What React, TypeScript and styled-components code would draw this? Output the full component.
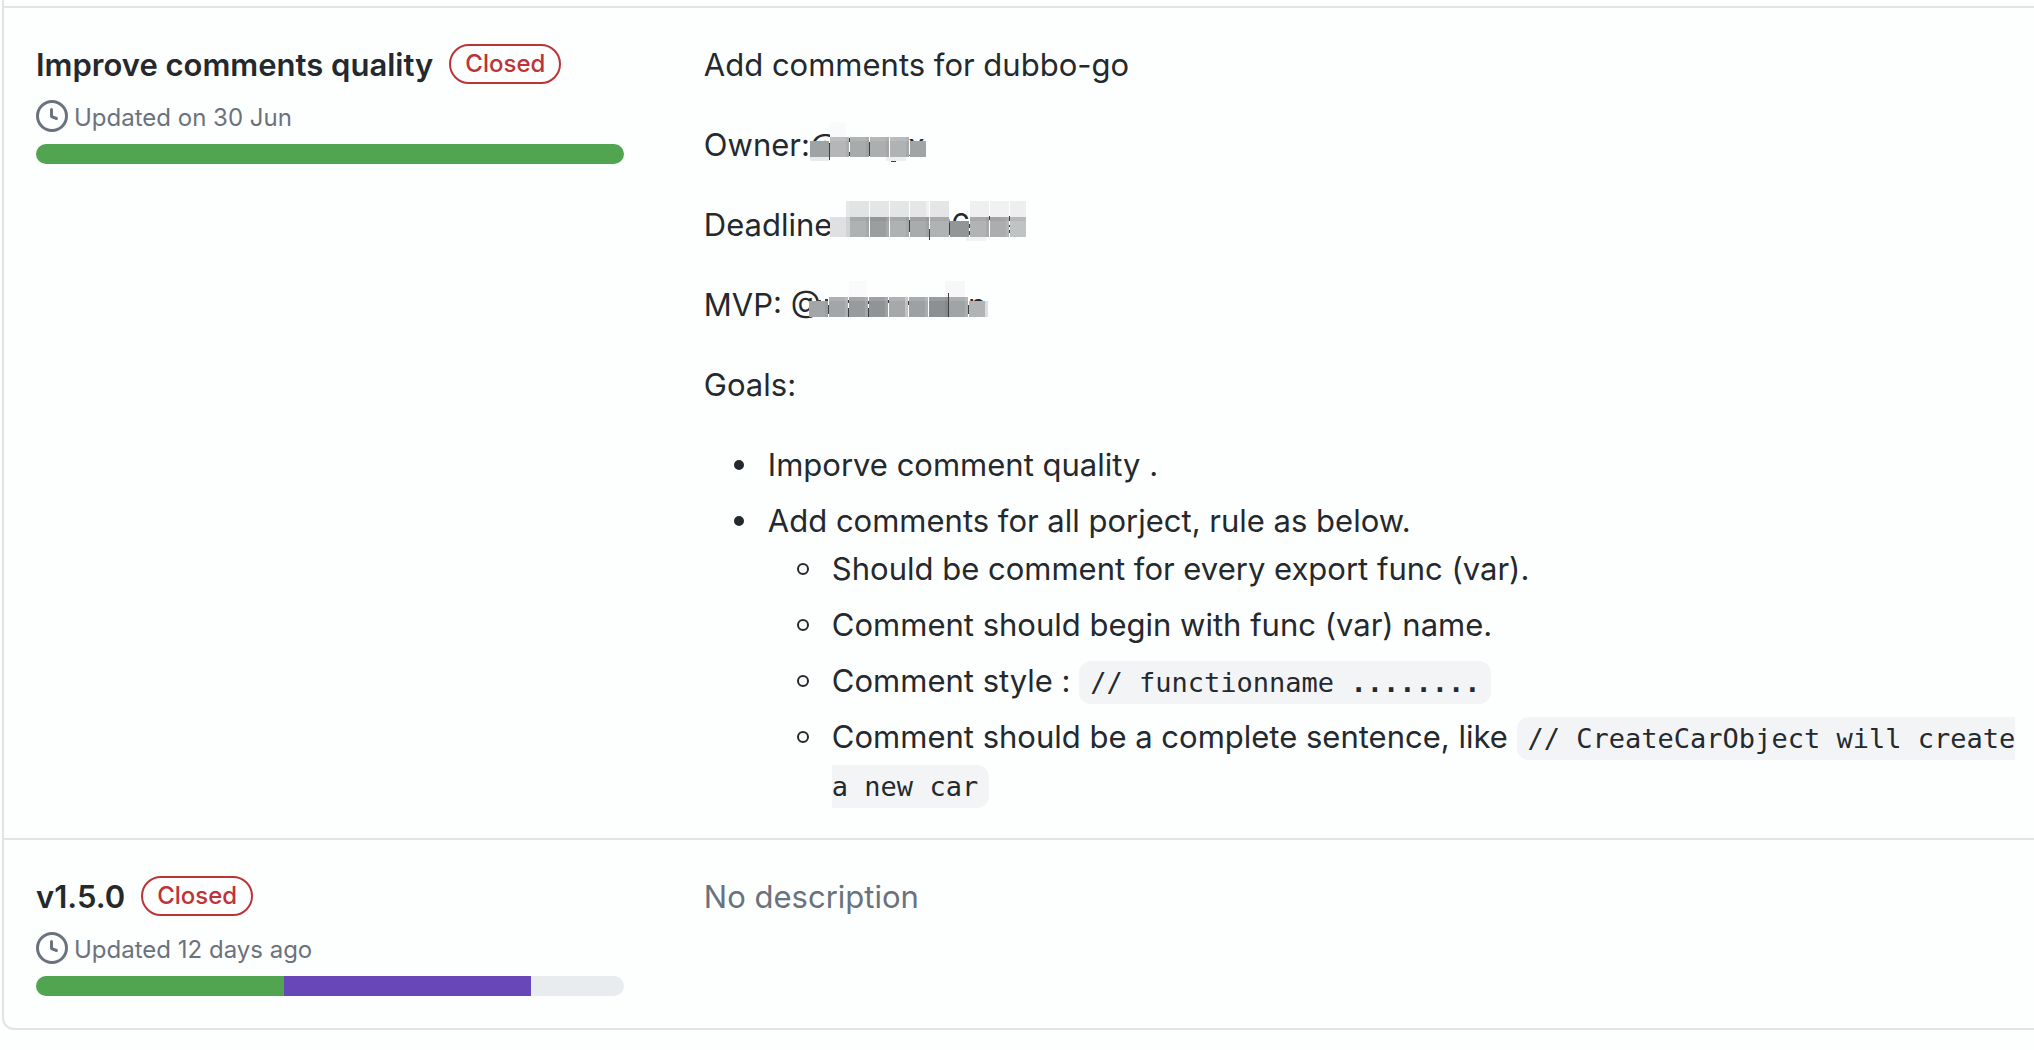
import React from "react";
import styled, { createGlobalStyle } from "styled-components";

const sans = `Inter, "Liberation Sans", sans-serif`;
const mono = `"DejaVu Sans Mono", "Liberation Mono", monospace`;

const GlobalStyle = createGlobalStyle`
  *, *::before, *::after { box-sizing: border-box; }
  body {
    margin: 0;
    background: #fdfefe;
    color: #24292e;
    font-family: ${sans};
    font-size: 31px;
    line-height: 48px;
    overflow-x: hidden;
  }
`;

const Page = styled.main`
  padding-left: 2px;
`;

const MilestoneList = styled.ul`
  list-style: none;
  margin: 0;
  padding: 6px 0 0;
  border: solid #e1e3e4;
  border-width: 0 0 2px 2px;
  border-bottom-left-radius: 12px;
`;

const MilestoneRow = styled.li<{ $tall?: boolean }>`
  display: grid;
  grid-template-columns: 29.6% minmax(0, 1fr);
  column-gap: 80px;
  padding: 32px 12px ${(p) => (p.$tall ? 29 : 32)}px 32px;
  border-top: 2px solid #e1e3e4;
`;

const Heading = styled.div`
  display: flex;
  align-items: center;
  gap: 16px;
`;

const Title = styled.h2`
  margin: 0;
  padding-top: 2px;
  font-size: 31px;
  line-height: 46px;
  font-weight: 600;
`;

const StateLabel = styled.span`
  height: 40px;
  padding: 0 14px;
  border: 2px solid #bc3338;
  border-radius: 20px;
  color: #bc3338;
  font-size: 24px;
  line-height: 36px;
  font-weight: 500;
`;

const Updated = styled.div`
  display: flex;
  align-items: center;
  gap: 6px;
  margin-top: 10px;
  color: #6a737d;
  font-size: 24px;
`;

const UpdatedText = styled.span`
  padding-top: 4px;
  line-height: 32px;
`;

const Progress = styled.div`
  display: flex;
  height: 20px;
  margin-top: 10px;
  border-radius: 10px;
  overflow: hidden;
  background: #e8ecef;
`;

const Segment = styled.span<{ $color: string }>`
  background: ${(p) => p.$color};
`;

const Description = styled.div`
  padding-top: 1px;
`;

const Paragraph = styled.p<{ $muted?: boolean }>`
  display: flex;
  margin: 0;
  color: ${(p) => (p.$muted ? "#6a737d" : "inherit")};

  & + & {
    margin-top: 32px;
  }
`;

const Goal = styled.li`
  & + & {
    margin-top: 8px;
  }

  &::before {
    content: "";
    display: inline-block;
    width: 12px;
    height: 12px;
    margin: 0 23px 0 -35px;
    vertical-align: 5px;
    border: 2px solid #24292e;
    border-radius: 50%;
  }
`;

const Goals = styled.ul`
  margin: 32px 0 0;
  padding-left: 64px;
  list-style: none;

  & > ${Goal}::before {
    width: 10px;
    height: 10px;
    margin: 0 24px 0 -34px;
    vertical-align: 6px;
    background: #24292e;
  }
`;

const SubGoals = styled.ul`
  margin: 0;
  padding-left: 64px;
  list-style: none;
`;

const Code = styled.code`
  padding: 6px 11px;
  border-radius: 12px;
  background: #f3f4f6;
  font-family: ${mono};
  font-size: 27px;
  line-height: 27px;
`;

const MosaicDrawing = styled.svg<{ $overlap: number }>`
  flex: none;
  display: block;
  margin-left: -${(p) => p.$overlap}px;
`;

type Rect = [x: number, y: number, w: number, h: number, color: string];
type Letter = [x: number, text: string];

function Mosaic({ width, overlap = 0, letters = [], rects }: {
  width: number;
  overlap?: number;
  letters?: Letter[];
  rects: Rect[];
}) {
  return (
    <MosaicDrawing $overlap={overlap} width={width} height={48} viewBox={`0 1 ${width} 48`} aria-hidden="true" shapeRendering="crispEdges">
      {letters.map(([x, t]) => (
        <text key={x} x={x} y={36} fontSize={31} fill="#24292e">{t}</text>
      ))}
      {rects.map(([x, y, w, h, fill], i) => (
        <rect key={i} x={x} y={y} width={w} height={h} fill={fill} />
      ))}
    </MosaicDrawing>
  );
}

const tick = "#3b3f42";
const shade = "rgba(60,66,70,0.08)";
const glow = "rgba(255,255,255,0.12)";
const page = "#fdfefe";

const ownerRects: Rect[] = [
  [0, 37, 34, 10, page],
  [20, 2, 16, 19, "#fafafc"],
  [0, 37, 20, 4, "#e9eaec"], [76, 37, 20, 4, "#eeeef1"],
  [0, 21, 19, 16, "#a0a3a4"],
  [20, 17, 19, 20, "#b4b6b7"], [40, 17, 19, 20, "#a8abac"],
  [60, 17, 19, 20, "#acaeaf"], [80, 17, 19, 20, "#b0b3b4"],
  [100, 21, 16, 16, "#a1a4a5"],
  [36, 17, 3, 20, shade], [56, 17, 3, 20, shade], [76, 17, 3, 20, shade], [96, 17, 3, 20, shade],
  [20, 17, 79, 4, glow],
  [39, 18, 1, 4, tick], [39, 32, 1, 4, tick], [59, 22, 1, 14, tick], [19, 24, 1, 16, tick],
  [19, 17, 1, 6, page], [81, 41, 5, 1, tick],
];

const deadlineRects: Rect[] = [
  [16, 1, 4, 16, "#e6e7e8"],
  [20, 1, 19, 16, "#e2e3e5"], [40, 1, 19, 16, "#e4e5e6"], [60, 1, 19, 16, "#e4e5e6"],
  [80, 1, 19, 16, "#e5e6e7"], [100, 1, 19, 16, "#e4e5e6"], [96, 1, 3, 16, "#f0f0f2"],
  [140, 1, 19, 16, "#efeff2"], [160, 1, 19, 16, "#f1f1f3"], [180, 1, 16, 16, "#eeeef0"],
  [136, 37, 20, 4, "#f2f2f5"],
  [0, 17, 20, 20, "#dfe0e1"],
  [20, 17, 19, 20, "#afb2b3"], [40, 17, 19, 20, "#9b9e9f"], [60, 17, 19, 20, "#afb2b3"],
  [80, 17, 19, 20, "#a9acad"], [100, 17, 19, 20, "#b0b3b4"], [120, 21, 19, 16, "#939697"],
  [140, 17, 19, 20, "#b1b3b4"], [160, 17, 19, 20, "#abadae"], [180, 17, 16, 20, "#c0c3c4"],
  [16, 17, 4, 20, shade], [36, 17, 3, 20, shade], [56, 17, 3, 20, glow], [76, 17, 3, 20, shade],
  [96, 17, 3, 20, shade], [156, 17, 3, 20, shade], [176, 17, 3, 20, glow],
  [20, 17, 99, 4, shade], [140, 17, 56, 4, shade],
  [79, 20, 1, 12, tick], [99, 29, 1, 11, tick], [119, 23, 1, 12, tick],
  [139, 24, 1, 4, tick], [139, 31, 1, 4, tick], [159, 16, 1, 4, tick],
  [179, 16, 1, 5, tick], [179, 25, 1, 2, tick], [179, 30, 1, 3, tick],
];

const mvpRects: Rect[] = [
  [40, 1, 18, 16, "#fafafc"], [136, 1, 20, 16, "#f7f7f9"],
  [8, 20, 4, 1, tick], [16, 19, 3, 2, tick],
  [0, 21, 19, 16, "#a3a6a8"],
  [20, 17, 19, 20, "#a3a6a8"], [40, 17, 19, 20, "#989b9d"], [60, 17, 19, 20, "#919496"],
  [80, 17, 19, 20, "#a6a8aa"], [100, 17, 19, 20, "#9ea1a3"], [120, 17, 19, 20, "#8d9092"],
  [140, 17, 19, 20, "#a1a4a6"], [160, 21, 16, 16, "#b1b3b5"], [176, 21, 3, 16, "#dddee0"],
  [16, 21, 3, 16, shade], [36, 17, 3, 20, glow], [56, 17, 3, 20, glow], [76, 17, 3, 20, glow],
  [96, 17, 3, 20, "#c0c2c4"], [116, 17, 3, 20, glow], [136, 17, 3, 20, shade], [156, 17, 3, 20, glow],
  [20, 17, 139, 4, glow],
  [19, 25, 1, 9, tick], [39, 20, 1, 3, tick], [39, 28, 1, 9, tick], [59, 21, 1, 3, tick],
  [59, 28, 1, 9, tick], [79, 20, 1, 3, tick], [99, 21, 1, 4, tick], [139, 13, 1, 24, tick], [159, 25, 1, 9, tick],
];

function ClockIcon() {
  return (
    <svg width="32" height="32" viewBox="0 0 16 16" fill="currentColor" aria-hidden="true">
      <path
        fillRule="evenodd"
        d="M1.5 8a6.5 6.5 0 1113 0 6.5 6.5 0 01-13 0zM8 0a8 8 0 100 16A8 8 0 008 0zm.5 4.75a.75.75 0 00-1.5 0v3.5a.75.75 0 00.471.696l2.5 1a.75.75 0 00.557-1.392L8.5 7.742V4.75z"
      />
    </svg>
  );
}

type Part = { color: string; share: number };

function Summary({ title, updated, parts }: { title: string; updated: string; parts: Part[] }) {
  return (
    <div>
      <Heading>
        <Title>{title}</Title>
        <StateLabel>Closed</StateLabel>
      </Heading>
      <Updated>
        <ClockIcon />
        <UpdatedText>{updated}</UpdatedText>
      </Updated>
      <Progress>
        {parts.map((p) => (
          <Segment key={p.color} $color={p.color} style={{ width: `${p.share * 100}%` }} />
        ))}
      </Progress>
    </div>
  );
}

const green = "#51a551";
const purple = "#6848b9";

export default function App() {
  return (
    <Page>
      <GlobalStyle />
      <MilestoneList>
        <MilestoneRow $tall>
          <Summary title="Improve comments quality" updated="Updated on 30 Jun" parts={[{ color: green, share: 1 }]} />
          <Description>
            <Paragraph>Add comments for dubbo-go</Paragraph>
            <Paragraph>
              Owner:
              <Mosaic width={120} letters={[[0, "@"], [98, "x"]]} rects={ownerRects} />
            </Paragraph>
            <Paragraph>
              Deadline
              <Mosaic width={200} overlap={2} letters={[[102, "0"], [121, "6"]]} rects={deadlineRects} />
            </Paragraph>
            <Paragraph>
              MVP: @
              <Mosaic width={184} overlap={12} letters={[[159, "n"]]} rects={mvpRects} />
            </Paragraph>
            <Paragraph>Goals:</Paragraph>
            <Goals>
              <Goal>Imporve comment quality .</Goal>
              <Goal>
                Add comments for all porject, rule as below.
                <SubGoals>
                  <Goal>Should be comment for every export func (var).</Goal>
                  <Goal>Comment should begin with func (var) name.</Goal>
                  <Goal>
                    Comment style : <Code>// functionname <b>........</b></Code>
                  </Goal>
                  <Goal>
                    Comment should be a complete sentence, like <Code>// CreateCarObject will create a new car</Code>
                  </Goal>
                </SubGoals>
              </Goal>
            </Goals>
          </Description>
        </MilestoneRow>
        <MilestoneRow>
          <Summary
            title="v1.5.0"
            updated="Updated 12 days ago"
            parts={[{ color: green, share: 8 / 19 }, { color: purple, share: 8 / 19 }]}
          />
          <Description>
            <Paragraph $muted>No description</Paragraph>
          </Description>
        </MilestoneRow>
      </MilestoneList>
    </Page>
  );
}
